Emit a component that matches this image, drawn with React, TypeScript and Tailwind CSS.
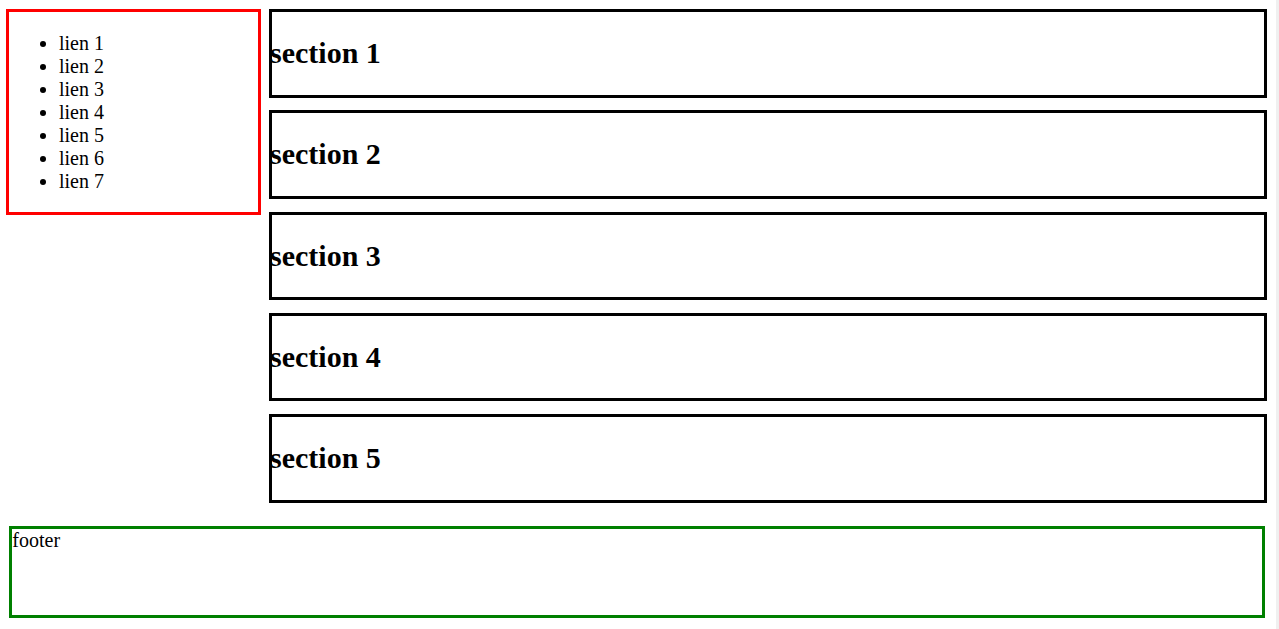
const links = ['lien 1', 'lien 2', 'lien 3', 'lien 4', 'lien 5', 'lien 6', 'lien 7'];
const sections = ['section 1', 'section 2', 'section 3', 'section 4', 'section 5'];

export default function App() {
  return (
    <div className="flex h-[629px] w-full overflow-hidden bg-white font-['Liberation_Serif',_'Times_New_Roman',_serif] text-[20px] leading-[23px] text-black">
      <div className="flex flex-1 flex-col pt-[9px]">
        <div className="flex items-start">
          {/* nav */}
          <nav className="ml-[6px] h-[205.5px] w-[255px] border-[3px] border-[#ff0000]">
            <ul className="mt-[20px] list-disc pl-[50px]">
              {links.map((l) => (
                <li key={l}>{l}</li>
              ))}
            </ul>
          </nav>

          {/* sections */}
          <div className="ml-[8px] flex w-[997.5px] flex-col gap-[12.75px]">
            {sections.map((s) => (
              <section key={s} className="flex h-[88.5px] items-center border-[3px] border-black">
                <h2 className="-ml-[2px] text-[30px] font-bold leading-[34.5px]">{s}</h2>
              </section>
            ))}
          </div>
        </div>

        {/* footer */}
        <footer className="ml-[9.3px] mt-[23.2px] h-[92px] w-[1256px] border-[3px] border-[#008000]">
          footer
        </footer>
      </div>
      <div className="w-[3px] bg-[#f0f0f0]" />
    </div>
  );
}
